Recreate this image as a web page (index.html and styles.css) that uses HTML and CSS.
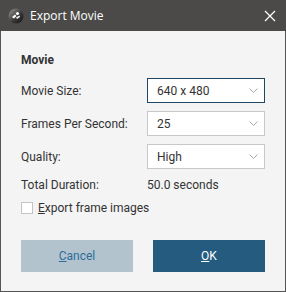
FILE: index.html
```html
<!DOCTYPE html>
<html lang="en">
<head>
  <meta charset="UTF-8" />
  <title>Export Movie</title>
  <link rel="stylesheet" href="styles.css">
</head>
<body>
  <div class="window">
    <!-- Title bar -->
    <div class="titlebar">
      <svg class="app-icon" width="16" height="16" viewBox="0 0 16 16">
        <defs>
          <linearGradient id="g" x1="0" y1="0" x2="1" y2="1">
            <stop offset="0" stop-color="#9a9a9a" />
            <stop offset="0.55" stop-color="#3a3a3a" />
            <stop offset="1" stop-color="#111" />
          </linearGradient>
        </defs>
        <circle cx="8" cy="8" r="7.5" fill="url(#g)" />
        <path d="M4 9 L7 6.5 L8.5 8 L6 10.5 Z" fill="#fff" />
        <circle cx="9.5" cy="5.5" r="1.6" fill="#fff" />
        <path d="M8 9.5 L11.5 7.5 L12 9 L9 11 Z" fill="#eee" />
      </svg>
      <span class="title">Export Movie</span>
      <svg class="close" width="12" height="12" viewBox="0 0 12 12">
        <path d="M1 1 L11 11 M11 1 L1 11" stroke="#fff" stroke-width="1.3" />
      </svg>
    </div>

    <div class="content">
      <h2 class="section">Movie</h2>

      <div class="form-grid">
        <label>Movie Size:</label>
        <div class="select focused">
          <span>640 x 480</span>
          <svg class="chev" width="9" height="5" viewBox="0 0 9 5"><path d="M0.5 0.5 L4.5 4.5 L8.5 0.5" fill="none" stroke="#a9a9a9" /></svg>
        </div>

        <label>Frames Per Second:</label>
        <div class="select">
          <span>25</span>
          <svg class="chev" width="9" height="5" viewBox="0 0 9 5"><path d="M0.5 0.5 L4.5 4.5 L8.5 0.5" fill="none" stroke="#a9a9a9" /></svg>
        </div>

        <label>Quality:</label>
        <div class="select">
          <span>High</span>
          <svg class="chev" width="9" height="5" viewBox="0 0 9 5"><path d="M0.5 0.5 L4.5 4.5 L8.5 0.5" fill="none" stroke="#a9a9a9" /></svg>
        </div>

        <label>Total Duration:</label>
        <div class="value">50.0 seconds</div>
      </div>

      <div class="check-row">
        <span class="checkbox"></span>
        <span><u>E</u>xport frame images</span>
      </div>

      <div class="buttons">
        <button class="btn cancel"><u>C</u>ancel</button>
        <button class="btn ok"><u>O</u>K</button>
      </div>
    </div>
  </div>
</body>
</html>
```

FILE: styles.css
```css
* {
  box-sizing: border-box;
}
body {
  margin: 0;
  font-family: Roboto, "Liberation Sans", sans-serif;
  font-size: 12px;
  color: #333;
}
.window {
  width: 286px;
  height: 292px;
  background: #f4f4f4;
  border: 1px solid #555;
  border-top: none;
}
.titlebar {
  height: 31px;
  background: #4b4a48;
  display: flex;
  align-items: center;
  padding: 0 10px 0 8px;
  margin: 0 -1px;
}
.app-icon {
  flex: none;
}
.title {
  flex: 1;
  color: #fff;
  font-family: "Open Sans", "Noto Sans", sans-serif;
  font-size: 12px;
  margin-left: 6px;
}
.close {
  flex: none;
}
.content {
  padding: 21px 20px 0 20px;
}
.section {
  margin: 0 0 10px 0;
  font-size: 12px;
  font-weight: bold;
  line-height: 16px;
}
.form-grid {
  display: grid;
  grid-template-columns: 126px 118px;
  grid-template-rows: 25px 25px 25px 16px;
  row-gap: 8px;
  align-items: center;
}
.select {
  height: 25px;
  background: #fff;
  border: 1px solid #c8c8c8;
  display: flex;
  align-items: center;
  justify-content: space-between;
  padding: 0 6px 0 9px;
}
.select.focused {
  border-color: #1e4763;
}
.value {
  line-height: 16px;
}
.check-row {
  display: flex;
  align-items: center;
  margin-top: 8px;
  height: 13px;
}
.checkbox {
  width: 12px;
  height: 12px;
  border: 1px solid #c4c4c4;
  background: #fff;
  margin-right: 5px;
}
.buttons {
  display: flex;
  justify-content: space-between;
  margin-top: 26px;
  padding-right: 0;
}
.btn {
  width: 112px;
  height: 32px;
  border: none;
  font-family: Roboto, "Liberation Sans", sans-serif;
  font-size: 12px;
}
.cancel {
  background: #b2c3ce;
  color: #2d6e9a;
}
.ok {
  background: #255b7e;
  color: #fff;
}
```
